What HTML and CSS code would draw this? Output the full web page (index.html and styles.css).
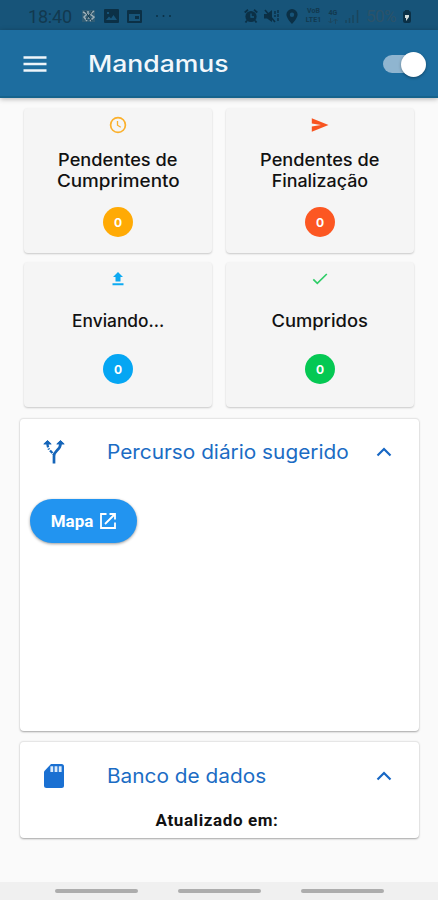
FILE: index.html
```html
<!DOCTYPE html>
<html lang="pt-BR">
<head>
<meta charset="utf-8">
<meta name="viewport" content="width=device-width, initial-scale=1">
<title>Mandamus</title>
<link rel="stylesheet" href="styles.css">
</head>
<body>
<div class="status">
  <span class="time">18:40</span>
  <svg class="s-app" width="15" height="14" viewBox="0 0 15 14"><path d="M1 1h13v12H1z" fill="#2f5d76"/><path d="M2 3l4 2-3 3 3 4M13 2L9 5l4 3-4 4M7 2v4M6 9h3" stroke="#9dafb8" stroke-width="1.500" fill="none"/><path d="M4 2l7 10M11 2L5 11" stroke="#183d50"/></svg>
  <svg class="s-img" width="15" height="14" viewBox="0 0 15 14"><path fill-rule="evenodd" d="M1 0h13q1 0 1 1v12q0 1-1 1H1q-1 0-1-1V1q0-1 1-1zm1 11h11L9.500 6 7 9.500 5 7.500zM3 3v2h2V3z"/></svg>
  <svg class="s-cal" width="15" height="13" viewBox="0 0 15 13"><path fill-rule="evenodd" d="M1 0h13q1 0 1 1v11q0 1-1 1H1q-1 0-1-1V1q0-1 1-1zM2 4v7h11V4zm6 2h4v3H8z"/></svg>
  <svg class="s-dots" width="17" height="4" viewBox="0 0 17 4"><circle cx="2" cy="2" r="1"/><circle cx="8.500" cy="2" r="1"/><circle cx="15" cy="2" r="1"/></svg>
  <span class="grow"></span>
  <svg class="s-alarm" width="14" height="14" viewBox="0 0 14 14"><circle cx="7" cy="7.500" r="5.600"/><path d="M.7 3.500L4 .8M13.300 3.500L10 .8M3 11.500l-1.500 2M11 11.500l1.500 2" stroke="#0b3046" stroke-width="1.800"/><path d="M7 4.500V8h3" stroke="#17587d" stroke-width="1.300" fill="none"/></svg>
  <svg class="s-mute" width="15" height="14" viewBox="0 0 15 14"><path d="M0 5h3l5-4v12L3 9.500H0z"/><path d="M1 1l10 12" stroke="#0b3046" stroke-width="1.600"/><path d="M11 2v6M14 1v12" stroke="#0b3046" stroke-width="1.400" stroke-dasharray="3 1"/></svg>
  <svg class="s-pin" width="12" height="15" viewBox="0 0 12 15"><path fill-rule="evenodd" d="M6 0a5.600 5.600 0 0 1 5.600 5.600C11.600 9.500 6 15 6 15S.4 9.500.4 5.600A5.600 5.600 0 0 1 6 0zm0 3.500a2.200 2.200 0 1 0 0 4.400 2.200 2.200 0 0 0 0-4.400z"/></svg>
  <span class="net volte"><b>VoB</b><b>LTE1</b></span>
  <span class="net fourg"><b>4G</b><svg width="10" height="6" viewBox="0 0 10 6"><path d="M2.500 0v5M.5 3l2 2 2-2M7.500 6V1M5.500 3l2-2 2 2" fill="none" stroke="#1c475f"/></svg></span>
  <svg class="s-sig" width="14" height="14" viewBox="0 0 14 14"><path d="M1 11v3M4.500 9v5M8 6v8M12.500 1v13" stroke="#1a455c" stroke-width="1.500"/></svg>
  <span class="pct">50%</span>
  <svg class="s-bat" width="10" height="14" viewBox="0 0 10 14"><path d="M3 1h4v1q2 0 2 2v8q0 2-2 2H3q-2 0-2-2V4q0-2 2-2z"/><path d="M3 6h4v2L4 12V9H3z" fill="#d3dcda"/></svg>
</div>
<header class="bar">
  <svg class="menu" width="24" height="16" viewBox="0 0 24 16"><path d="M.5 1.500h23M.5 8h23M.5 14.500h23" stroke="#eef5fa" stroke-width="2.600"/></svg>
  <h1>Mandamus</h1>
  <span class="switch"><span class="knob"></span></span>
</header>
<main>
  <section class="tiles">
    <article class="tile">
      <svg width="18" height="18" viewBox="0 0 18 18" fill="none" stroke="#fbb02b"><circle cx="9" cy="9" r="7.400" stroke-width="1.700"/><path d="M8.500 5v4.200l3.300 2" stroke-width="1.300"/></svg>
      <h2><span class="t1">Pendentes de</span><br><span class="t2">Cumprimento</span></h2>
      <span class="badge amber">0</span>
    </article>
    <article class="tile">
      <svg width="18" height="18" viewBox="0 0 18 18"><path d="M.8 2.200L17.500 9 .8 15.800v-5.200L10 9 .8 7.400z" fill="#f85420"/></svg>
      <h2><span class="t1">Pendentes de</span><br><span class="t3">Finalização</span></h2>
      <span class="badge orange">0</span>
    </article>
    <article class="tile single">
      <svg width="18" height="18" viewBox="0 0 18 18"><path d="M9 2l5 5h-2.500v4.500h-5V7H4zM3.500 13.300h11v1.900h-11z" fill="#0daaf2"/></svg>
      <h2><span class="t4">Enviando...</span></h2>
      <span class="badge blue">0</span>
    </article>
    <article class="tile single">
      <svg width="18" height="18" viewBox="0 0 18 18"><path d="M2.300 9.300l4 4L15.800 4" fill="none" stroke="#2fcd68" stroke-width="1.700"/></svg>
      <h2><span class="t5">Cumpridos</span></h2>
      <span class="badge green">0</span>
    </article>
  </section>
  <section class="panel route">
    <div class="head">
      <svg class="lead" width="22" height="26" viewBox="0 0 22 26"><path d="M.8 5L4.500 1.500 8.200 5zM13.800 5l3.700-3.500L21.200 5z" fill="#1565b9" stroke="#1565b9" stroke-linejoin="round"/><path d="M17.500 5c0 6-6.500 6.500-6.500 12v7.500" fill="none" stroke="#1565b9" stroke-width="2.700"/><path d="M4.500 5q.1 3 1.600 5.500M7 11.500q2 2 3.500 4" fill="none" stroke="#1565b9" stroke-width="2.300" stroke-dasharray="3.500 1"/></svg>
      <h3>Percurso diário sugerido</h3>
      <svg class="chev" width="16" height="10" viewBox="0 0 16 10"><path d="M1.500 8.500L8 2l6.500 6.500" fill="none" stroke="#1767c4" stroke-width="2.200"/></svg>
    </div>
    <button class="map"><span>Mapa</span><svg width="16" height="16" viewBox="0 0 16 16" fill="none" stroke="#fff" stroke-width="1.800"><path d="M6.500 1H1v14h14V9.500M9.500 1H15v5.500M15 1L5 11"/></svg></button>
  </section>
  <section class="panel data">
    <div class="head">
      <svg class="lead" width="22" height="26" viewBox="0 0 22 26"><path fill="#1a70d2" d="M8 1h10.500Q21 1 21 3.500v19q0 2.500-2.500 2.500h-15Q1 25 1 22.500V8.500z"/><path d="M8.800 3.200V9M13 3.200V9M17.200 3.200V9" stroke="#dcebfa" stroke-width="2.800"/></svg>
      <h3>Banco de dados</h3>
      <svg class="chev" width="16" height="10" viewBox="0 0 16 10"><path d="M1.500 8.500L8 2l6.500 6.500" fill="none" stroke="#1767c4" stroke-width="2.200"/></svg>
    </div>
    <p>Atualizado em:</p>
  </section>
</main>
<nav><i></i><i></i><i></i></nav>
</body>
</html>
```
FILE: styles.css
```css
* { box-sizing: border-box; }
body {
  margin: 0;
  height: 900px;
  display: flex;
  flex-direction: column;
  overflow: hidden;
  background: #fafafa;
  font-family: Inter, sans-serif;
}
h1, h2, h3, p { margin: 0; white-space: nowrap; }
svg { display: block; flex: none; }

.status {
  height: 30px;
  flex: none;
  display: flex;
  align-items: center;
  padding: 2px 26px 0 28px;
  background: #175479;
  color: #12394f;
  font-family: Roboto, sans-serif;
}
.status svg { fill: #0b3046; }
.time { width: 44px; font-size: 18px; letter-spacing: -.2px; }
.s-app { margin-left: 9px; }
.s-img { margin-left: 8px; }
.s-cal { margin-left: 8px; }
.s-dots { margin-left: 13px; }
.grow { flex: 1; }
.s-mute { margin-left: 6px; }
.s-pin { margin-left: 7px; }
.net {
  display: flex;
  flex-direction: column;
  align-items: center;
  font-size: 7px;
  line-height: 9px;
}
.volte { width: 19px; margin-left: 6px; }
.fourg { width: 12px; margin-left: 4px; }
.s-sig { margin-left: 6px; }
.pct { width: 33px; margin-left: 7px; font-size: 17px; letter-spacing: -.6px; color: #2b536a; }
.s-bat { margin-left: 3px; }

.bar {
  height: 68px;
  flex: none;
  display: flex;
  align-items: center;
  padding: 0 13px 0 23px;
  background: #1d6d9f;
  border-bottom: 2px solid #16638c;
  box-shadow: 0 1px 5px rgba(0, 0, 0, .3);
}
.menu { margin-top: 2px; }
h1 {
  margin: 2px 0 0 41px;
  font-size: 23.500px;
  line-height: 30px;
  font-weight: 500;
  color: #f2f7fb;
  transform: scaleX(1.13);
  transform-origin: left;
}
.switch {
  width: 42px;
  height: 18px;
  margin: 2px 0 0 auto;
  border-radius: 9px;
  display: flex;
  align-items: center;
  justify-content: flex-end;
  background: #8fb5d0;
}
.knob {
  width: 25px;
  height: 25px;
  flex: none;
  margin-right: -1px;
  border-radius: 50%;
  background: #fff;
  box-shadow: 0 1px 3px rgba(0, 0, 0, .35);
}

main { flex: 1; padding: 10px 19px 0 20px; }
.tiles {
  display: grid;
  grid-template-columns: 188px 188px;
  grid-auto-rows: 145px;
  gap: 9px 14px;
  padding: 0 4px;
}
.tile {
  display: flex;
  flex-direction: column;
  align-items: center;
  padding-top: 8px;
  border-radius: 4px;
  background: #f5f5f5;
  box-shadow: 0 1px 2px rgba(0, 0, 0, .2);
}
.tile h2 {
  margin: 16px 0 15px;
  font-size: 17px;
  line-height: 21px;
  font-weight: 500;
  text-align: center;
  color: #111;
}
.tile.single h2 { margin: 23px 0 22px; }
.tile h2 span { display: inline-block; vertical-align: top; }
.t1 { transform: scaleX(1.07); }
.t2 { transform: scaleX(1.11); }
.t3 { transform: scaleX(1.05); }
.t4 { transform: scaleX(1.02); }
.t5 { transform: scaleX(1.08); }
.badge {
  width: 30px;
  height: 30px;
  border-radius: 50%;
  display: flex;
  align-items: center;
  justify-content: center;
  font-size: 12px;
  font-weight: 700;
  color: #fff;
}
.amber { background: #ffaa05; }
.orange { background: #fc5722; }
.blue { background: #05a6f3; }
.green { background: #05c853; }

.panel {
  margin-top: 11px;
  border-radius: 4px;
  background: #fff;
  border-top: 1px solid #e6e6e6;
  box-shadow: 0 1px 2px rgba(0, 0, 0, .35);
}
.route { height: 313px; }
.data { height: 97px; margin-top: 10px; }
.head { height: 67px; display: flex; align-items: center; padding: 0 27px 0 23px; }
.route .head { height: 66px; }
h3 {
  margin-left: 42px;
  font-size: 19.500px;
  line-height: 26px;
  font-weight: 400;
  color: #1b6cc4;
  transform: scaleX(1.067);
  transform-origin: left;
}
.chev { margin-left: auto; }
.map {
  width: 107px;
  height: 44px;
  margin: 14px 0 0 10px;
  padding: 0;
  border: 0;
  border-radius: 22px;
  display: flex;
  align-items: center;
  justify-content: center;
  gap: 7px;
  background: #2294f0;
  box-shadow: 0 1px 3px rgba(0, 0, 0, .4);
  color: #fff;
  font: 700 17px/20px Roboto, sans-serif;
}
.data p {
  margin-top: 1px;
  text-align: center;
  padding-right: 5px;
  font: 700 17px/20px Roboto, sans-serif;
  letter-spacing: .6px;
  color: #111;
}
nav {
  height: 18px;
  flex: none;
  display: flex;
  justify-content: center;
  gap: 40px;
  padding-top: 7px;
  background: #f0f0f0;
}
nav i { width: 83px; height: 4px; border-radius: 2px; background: #adadad; }
```
